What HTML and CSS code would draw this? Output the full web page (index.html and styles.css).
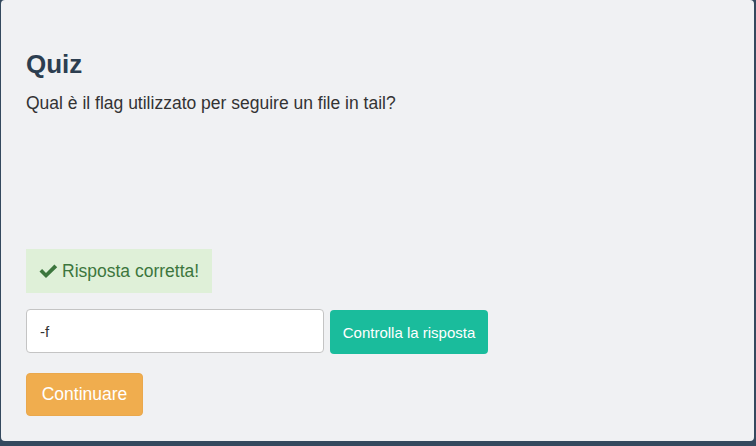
FILE: index.html
```html
<!DOCTYPE html>
<html lang="it">
<head>
<meta charset="utf-8">
<title>Quiz</title>
<link rel="stylesheet" href="styles.css">
</head>
<body>
<div class="panel">
  <h1 class="title">Quiz</h1>
  <p class="question">Qual è il flag utilizzato per seguire un file in tail?</p>
  <div class="alert">
    <svg class="check" viewBox="0 0 19 14" width="19" height="14" aria-hidden="true"><path d="M0.5 7.6 L3.1 5 L7 8.9 L15.4 0.5 L18.2 3.2 L7 14 Z" fill="#3c763d"/></svg>
    <span>Risposta corretta!</span>
  </div>
  <div class="answer-row">
    <input class="answer" type="text" value="-f">
    <button class="btn-check" type="button">Controlla la risposta</button>
  </div>
  <button class="btn-continue" type="button">Continuare</button>
</div>
</body>
</html>
```
FILE: styles.css
```css
html, body {
  margin: 0;
  padding: 0;
  background: #34495e;
  height: 100%;
  overflow: hidden;
}
body {
  font-family: "Liberation Sans", Arial, sans-serif;
}
.panel {
  box-sizing: border-box;
  margin-left: 1px;
  width: 753px;
  height: 441px;
  background: #f0f1f3;
  border-radius: 4px;
  padding: 0 25px;
  display: flex;
  flex-direction: column;
  align-items: flex-start;
}
.title {
  margin: 49px 0 0;
  font-size: 26px;
  line-height: 30px;
  font-weight: bold;
  color: #2c3e50;
}
.question {
  margin: 14px 0 0;
  font-size: 17.5px;
  line-height: 20px;
  color: #333;
}
.alert {
  box-sizing: border-box;
  margin-top: 136px;
  height: 44px;
  padding: 0 13px;
  background: #dff0d8;
  color: #3c763d;
  font-size: 17.5px;
  white-space: nowrap;
  display: flex;
  align-items: center;
  gap: 4px;
}
.check {
  flex: none;
  margin-top: -1px;
}
.answer-row {
  margin-top: 16px;
  display: flex;
  align-items: flex-start;
  gap: 6px;
}
.answer {
  box-sizing: border-box;
  width: 298px;
  height: 44px;
  padding: 0 13px;
  border: 1px solid #c4c4c4;
  border-radius: 4px;
  background: #fff;
  font-family: "Liberation Sans", Arial, sans-serif;
  font-size: 15px;
  color: #333;
  outline: none;
}
.btn-check {
  box-sizing: border-box;
  margin-top: 1px;
  width: 158px;
  height: 44px;
  border: none;
  border-radius: 4px;
  background: #1abc9c;
  color: #fff;
  font-family: "Liberation Sans", Arial, sans-serif;
  font-size: 15px;
  padding: 0;
}
.btn-continue {
  box-sizing: border-box;
  margin-top: 19px;
  width: 117px;
  height: 43px;
  border: 1px solid #eaa84c;
  border-radius: 4px;
  background: #f0ad4e;
  color: #fff;
  font-family: "Liberation Sans", Arial, sans-serif;
  font-size: 17.5px;
  padding: 0;
}
```
